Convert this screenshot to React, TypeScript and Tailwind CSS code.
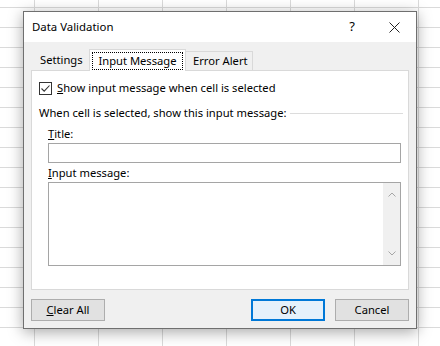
import React from "react";

const GridBackground: React.FC = () => {
  const cells = Array.from({ length: 8 * 18 });
  return (
    <div className="grid grid-cols-[35px_repeat(7,64px)] grid-rows-[8px_repeat(17,20px)]">
      {cells.map((_, i) => (
        <div key={i} className="border-r border-b border-[#dadada]" />
      ))}
    </div>
  );
};

const CheckBox: React.FC = () => (
  <div className="w-[13px] h-[13px] border border-[#333333] bg-white flex items-center justify-center">
    <svg width="11" height="11" viewBox="0 0 11 11">
      <path d="M1.5 5.5 L4.2 8.2 L9.5 2.5" fill="none" stroke="#333333" strokeWidth="1.1" />
    </svg>
  </div>
);

const DialogButton: React.FC<{ children: React.ReactNode; primary?: boolean }> = ({ children, primary }) => (
  <button
    className={
      primary
        ? "w-[74px] h-[22px] bg-[#e5f1fb] border-2 border-[#0078d7] text-[11.2px] leading-none text-black"
        : "w-[74px] h-[22px] bg-[#e1e1e1] border border-[#adadad] text-[11.2px] leading-none text-black"
    }
  >
    {children}
  </button>
);

const App: React.FC = () => {
  return (
    <div className="relative w-[440px] h-[346px] overflow-hidden bg-white font-['Segoe_UI','Noto_Sans',sans-serif] text-black">
      <GridBackground />

      {/* Dialog window */}
      <div className="absolute left-[23px] top-[11px] w-[394px] h-[318px] border border-[#6f6f6f] bg-[#f0f0f0] shadow-[0_3px_14px_rgba(0,0,0,0.35)] flex flex-col">
        {/* Title bar */}
        <div className="h-[30px] bg-white flex items-center pl-[8px] shrink-0">
          <span className="text-[11.4px]">Data Validation</span>
          <span className="ml-auto text-[13px] mr-[34px]">?</span>
          <svg width="11" height="11" viewBox="0 0 11 11" className="mr-[16px]">
            <path d="M0.5 0.5 L10.5 10.5 M10.5 0.5 L0.5 10.5" stroke="#222222" strokeWidth="1" />
          </svg>
        </div>

        <div className="flex-1 px-[7px] pt-[7px]">
          {/* Tabs */}
          <div className="flex items-end h-[21px] text-[11.2px]">
            <div className="w-[58px] h-[19px] pl-[9px] flex items-center">Settings</div>
            <div className="relative w-[97px] h-[22px] -mb-px bg-white border border-b-0 border-[#d9d9d9] flex items-center justify-center z-10">
              <span className="px-[5px] py-px border border-dotted border-black leading-[14px]">Input Message</span>
            </div>
            <div className="w-[67px] h-[19px] pl-[7px] border-t border-r border-[#d9d9d9] flex items-center">Error Alert</div>
          </div>

          {/* Panel */}
          <div className="h-[220px] bg-white border border-[#d9d9d9] flex flex-col text-[11.2px]">
            <div className="mt-[10px] pl-[7px] h-[15px] flex items-center">
              <CheckBox />
              <span className="ml-[5px]">
                <span className="underline">S</span>how input message when cell is selected
              </span>
            </div>

            <div className="mt-[9px] pl-[7px] pr-[5px] h-[16px] flex items-center">
              <span className="whitespace-nowrap">When cell is selected, show this input message:</span>
              <div className="flex-1 ml-[4px] h-px bg-[#dcdcdc]" />
            </div>

            <div className="mt-[5px] pl-[16px] h-[16px] flex items-center">
              <span>
                <span className="underline">T</span>itle:
              </span>
            </div>
            <div className="ml-[16px] mt-px w-[353px] h-[20px] border border-[#a5a5a5] bg-white" />

            <div className="mt-[2px] pl-[16px] h-[16px] flex items-center">
              <span>
                <span className="underline">I</span>nput message:
              </span>
            </div>
            <div className="ml-[16px] mt-px w-[353px] h-[84px] border border-[#a5a5a5] bg-white flex justify-end">
              <div className="w-[17px] bg-[#f0f0f0] flex flex-col items-center justify-between py-[9px]">
                <svg width="8" height="5" viewBox="0 0 8 5">
                  <path d="M0.5 4.5 L4 1 L7.5 4.5" fill="none" stroke="#a6a6a6" strokeWidth="1" />
                </svg>
                <svg width="8" height="5" viewBox="0 0 8 5">
                  <path d="M0.5 0.5 L4 4 L7.5 0.5" fill="none" stroke="#a6a6a6" strokeWidth="1" />
                </svg>
              </div>
            </div>
          </div>

          {/* Buttons */}
          <div className="mt-[9px] flex items-center">
            <DialogButton>
              <span className="underline">C</span>lear All
            </DialogButton>
            <div className="ml-auto flex gap-[10px]">
              <DialogButton primary>OK</DialogButton>
              <DialogButton>Cancel</DialogButton>
            </div>
          </div>
        </div>
      </div>
    </div>
  );
};

export default App;
